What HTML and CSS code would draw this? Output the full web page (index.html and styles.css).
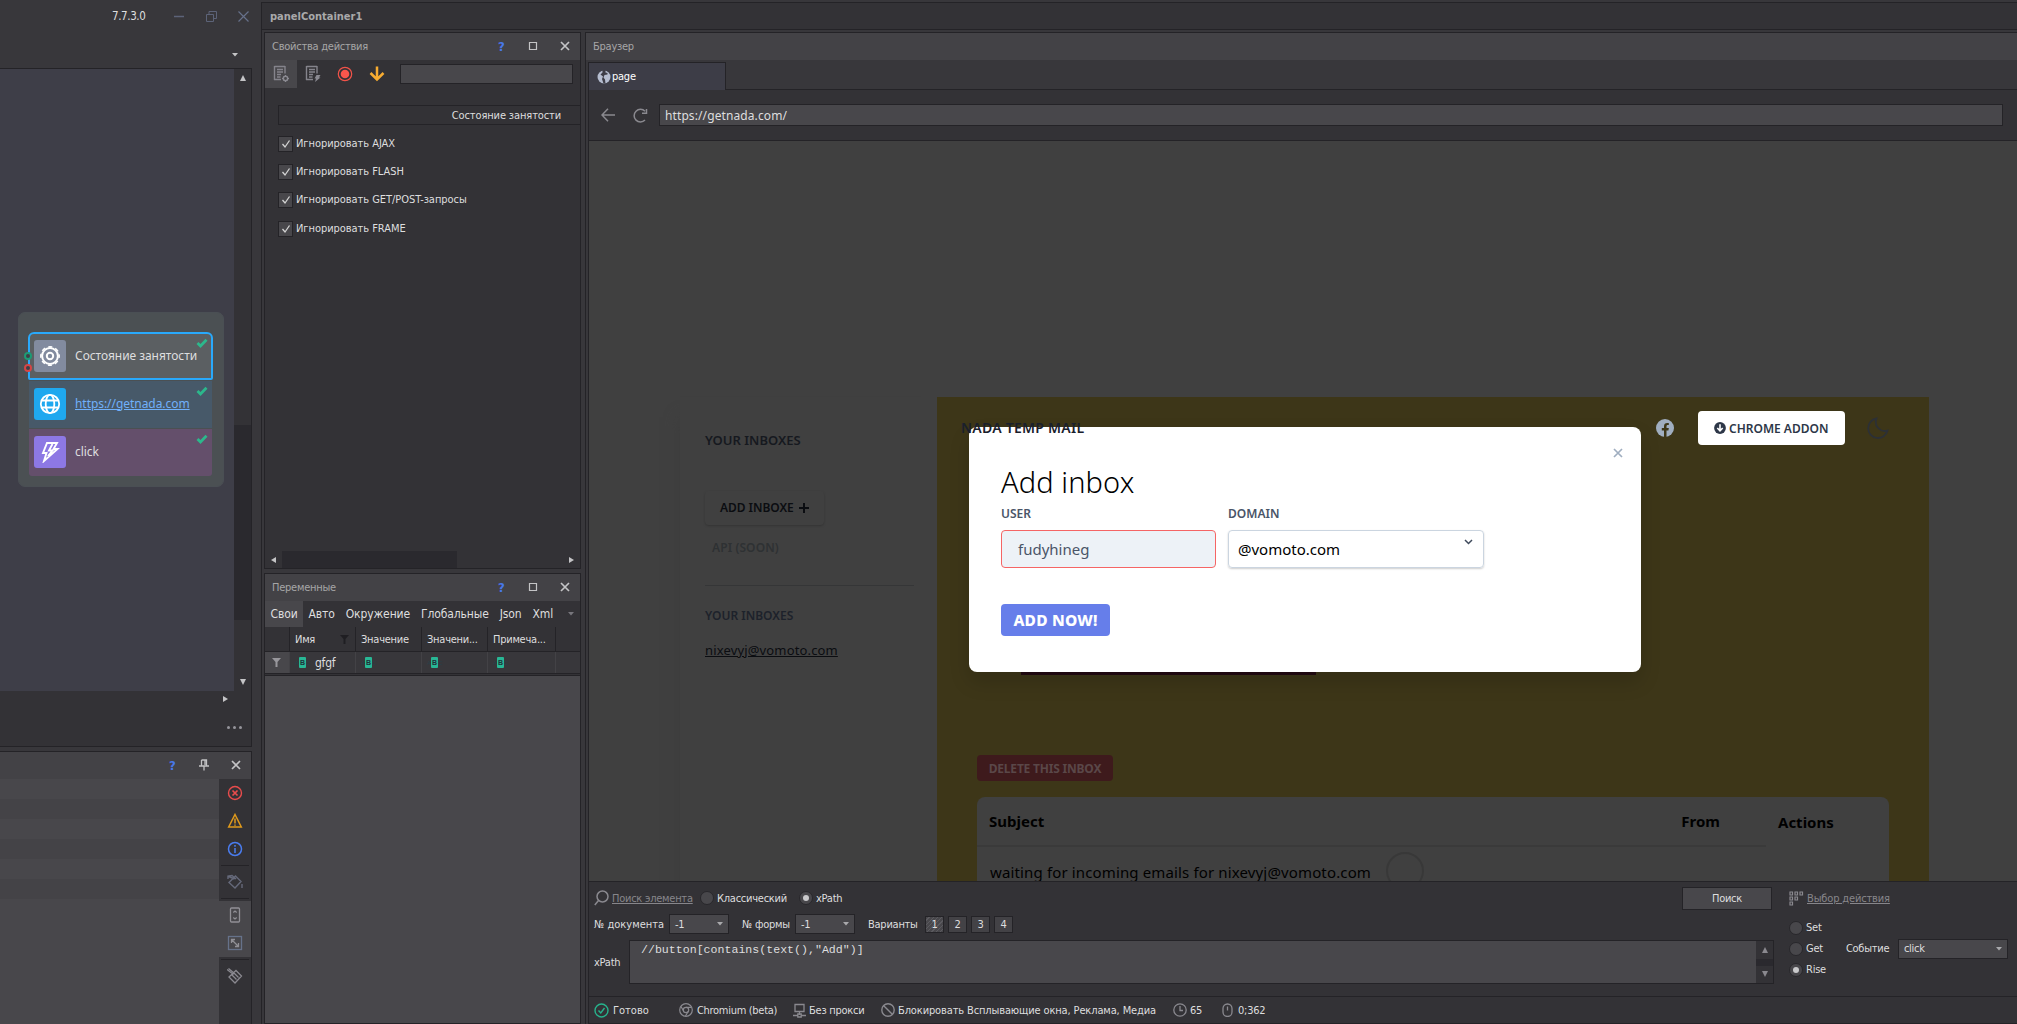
FILE: index.html
```html
<!DOCTYPE html>
<html lang="ru">

<head>
    <meta charset="UTF-8">
    <meta name="viewport" content="width=device-width, initial-scale=1.0">
    <title>panelContainer1</title>
    <link rel="stylesheet" href="styles.css">
</head>

<body>
    <!-- shared icons -->
    <svg width="0" height="0" class="defs">
        <symbol id="close" viewBox="0 0 10 10"><path d="M1 1L9 9M9 1L1 9" fill="none" stroke="currentColor" stroke-width="1.7"/></symbol>
        <symbol id="max" viewBox="0 0 10 10"><path d="M1.5 1.5h7v7h-7z" fill="none" stroke="currentColor" stroke-width="1.2"/></symbol>
        <symbol id="down" viewBox="0 0 8 8"><path d="M1 2h6L4 5.5z" fill="currentColor"/></symbol>
        <symbol id="check" viewBox="0 0 12 10"><path d="M1.5 5L4.5 8L10.5 1.8" fill="none" stroke="#2cb88c" stroke-width="2.8"/></symbol>
        <symbol id="tick" viewBox="0 0 14 14"><path d="M3.5 7L6 10L10.5 3.5" fill="none" stroke="#d4d4d4" stroke-width="1.3"/></symbol>
        <symbol id="list" viewBox="0 0 18 18"><path d="M2.500 1.500h10.500M2.500 1v14M2 14.500h7M13 1v7.500M5 4.500h6M5 7h6M5 9.500h4M5 12h3.500" fill="none" stroke="#85848c" stroke-width="1.400"/></symbol>
    </svg>

    <div class="left">
        <div class="window-bar">
            <span class="version">7.7.3.0</span>
            <svg class="wi" width="11" height="11"><path d="M0 5.500h10" stroke="#5c6378" stroke-width="1.500"/></svg>
            <svg class="wi" width="11" height="11"><path d="M.5 3.500h7v7h-7zM3 3V.5h7.500v7H8" fill="none" stroke="#5c6378"/></svg>
            <svg class="wi" width="11" height="11"><path d="M.5.5l10 10M10.500.5l-10 10" stroke="#66708a" stroke-width="1.200"/></svg>
            <svg class="bar-caret" width="8" height="8"><use href="#down"/></svg>
        </div>

        <div class="flow">
            <div class="flow-row">
                <div class="canvas">
                    <div class="group">
                        <div class="node node-selected">
                            <i class="port port-ok"></i><i class="port port-bad"></i>
                            <span class="node-icon gray"><svg width="22" height="22" viewBox="0 0 22 22" fill="none" stroke="#fff" stroke-width="2"><circle cx="11" cy="11" r="7.900"/><circle cx="11" cy="11" r="9.200" stroke-width="1.500" stroke-dasharray="4 3.226" stroke-dashoffset="2"/><circle cx="11" cy="11" r="3.200"/></svg></span>
                            <span class="node-text">Состояние занятости</span>
                            <svg class="node-check" width="12" height="10"><use href="#check"/></svg>
                        </div>
                        <div class="node node-url">
                            <span class="node-icon blue"><svg width="22" height="22" viewBox="0 0 22 22" fill="none" stroke="#fff" stroke-width="1.800"><circle cx="11" cy="11" r="9.200"/><ellipse cx="11" cy="11" rx="4.300" ry="9.200"/><path d="M3 7.500h16M3 14.500h16"/></svg></span>
                            <a class="node-text link">https://getnada.com</a>
                            <svg class="node-check" width="12" height="10"><use href="#check"/></svg>
                        </div>
                        <div class="node node-click">
                            <span class="node-icon violet"><svg width="22" height="22" viewBox="0 0 22 22" fill="none" stroke="#fff" stroke-width="1.900"><path d="M8 2h10l-3.500 6h4L5 20l2.500-8H4zM13.500 3l-3.500 6.500h3.500L9 15"/></svg></span>
                            <span class="node-text">click</span>
                            <svg class="node-check" width="12" height="10"><use href="#check"/></svg>
                        </div>
                    </div>
                </div>
                <div class="vscroll">
                    <svg width="8" height="6"><path d="M1 6L4 0l3 6z" fill="#c4c4c6"/></svg>
                    <div class="vthumb"></div>
                    <svg width="8" height="6"><path d="M1 0l3 6l3-6z" fill="#c4c4c6"/></svg>
                </div>
            </div>
            <div class="hscroll"><svg width="6" height="8"><path d="M0 1l5 3l-5 3z" fill="#c4c4c6"/></svg></div>
            <div class="dots"><i></i><i></i><i></i></div>
        </div>

        <div class="log">
            <div class="head log-head">
                <span class="help">?</span>
                <svg width="10" height="12" fill="none" stroke="#c2c2c4" stroke-width="1.300"><path d="M2.500 1h5v5.500M2.500 1v5.500M0 7h10M5 7v4.500M6 1v5"/></svg>
                <svg width="10" height="10"><use href="#close"/></svg>
            </div>
            <div class="log-body">
                <div class="log-rows"></div>
                <div class="log-tools">
                    <div class="tool"><svg width="16" height="16" fill="none" stroke="#e84c4c" stroke-width="1.400"><circle cx="8" cy="8" r="6.500"/><path d="M5.500 5.500l5 5M10.500 5.500l-5 5" stroke-width="1.700"/></svg></div>
                    <div class="tool"><svg width="16" height="16" fill="none" stroke="#e09a1c" stroke-width="1.500"><path d="M8 1.500L14.300 14H1.700zM8 5.500v5M8 11.500v1.300"/></svg></div>
                    <div class="tool"><svg width="16" height="16" fill="none" stroke="#4a7df0" stroke-width="1.500"><circle cx="8" cy="8" r="6.500"/><path d="M8 4v1.700M8 7v5"/></svg></div>
                    <div class="tool tool-line"><svg width="16" height="16" fill="none" stroke="#65697a" stroke-width="1.400"><path d="M8.500 2L14 7.500l-6 6.500L2 8.500zM1 5V2l4-.5l4 3.500M1.500 2.500l6 2.500M15 10v4"/></svg></div>
                    <div class="tool tool-on"><svg width="16" height="16" fill="none" stroke="#919096" stroke-width="1.300"><rect x="3.500" y="1" width="9" height="14" rx="1"/><path d="M6.300 5.500L8 4l1.700 1.500M6.300 10.500L8 12l1.700-1.500"/></svg></div>
                    <div class="tool tool-on"><svg width="16" height="16" fill="none" stroke="#919096" stroke-width="1.300"><rect x="1.500" y="1.500" width="13" height="13" stroke="#66728a"/><path d="M4.500 8V4.500H8M4.500 4.500l7 7M8 11.500h3.500V8"/></svg></div>
                    <div class="tool tool-line"><svg width="16" height="16" fill="none" stroke="#8a8990" stroke-width="1.300"><path d="M9 2.500L14.500 8L8 15L2 9zM0 1.500l6.500 5M1.500 .5l6 5M4.500 6.500l5 5M6.500 4.500l5 5"/></svg></div>
                </div>
            </div>
        </div>
    </div>

    <div class="container">
        <div class="container-title">panelContainer1</div>
        <div class="panels">
            <div class="side">
                <div class="panel props">
                    <div class="head">
                        <span class="head-title">Свойства действия</span>
                        <span class="help">?</span>
                        <svg width="10" height="10"><use href="#max"/></svg>
                        <svg width="10" height="10"><use href="#close"/></svg>
                    </div>
                    <div class="props-tools">
                        <span class="pt pt-on"><svg width="18" height="18"><use href="#list"/><circle cx="13.500" cy="13.500" r="2.200" fill="none" stroke="#8b8a92" stroke-width="1.500"/><path d="M13.500 10v1M13.500 16v1M10 13.500h1M16 13.500h1" stroke="#8b8a92"/></svg></span>
                        <span class="pt"><svg width="18" height="18"><use href="#list"/><path d="M12.500 10h4l-1.500 2.500h1.500L11 17l1-3.500h-1.500z" fill="#8b8a92"/></svg></span>
                        <span class="pt"><svg width="16" height="16"><circle cx="8" cy="8" r="6.700" fill="none" stroke="#f25349" stroke-width="1.200"/><circle cx="8" cy="8" r="4.300" fill="#f9564c"/></svg></span>
                        <span class="pt"><svg width="16" height="16"><path d="M8 .5v13M1.500 7L8 13.500L14.500 7" fill="none" stroke="#f7ac31" stroke-width="2.500"/></svg></span>
                        <div class="props-input"></div>
                    </div>
                    <div class="props-body">
                        <div class="props-group">Состояние занятости</div>
                        <div class="check"><i><svg width="14" height="14"><use href="#tick"/></svg></i>Игнорировать AJAX</div>
                        <div class="check"><i><svg width="14" height="14"><use href="#tick"/></svg></i>Игнорировать FLASH</div>
                        <div class="check"><i><svg width="14" height="14"><use href="#tick"/></svg></i>Игнорировать GET/POST-запросы</div>
                        <div class="check"><i><svg width="14" height="14"><use href="#tick"/></svg></i>Игнорировать FRAME</div>
                    </div>
                    <div class="props-scroll">
                        <svg width="6" height="8"><path d="M5 1L0 4l5 3z" fill="#c4c4c6"/></svg>
                        <div class="hthumb"></div>
                        <svg width="6" height="8"><path d="M0 1l5 3l-5 3z" fill="#c4c4c6"/></svg>
                    </div>
                </div>

                <div class="panel vars">
                    <div class="head">
                        <span class="head-title">Переменные</span>
                        <span class="help">?</span>
                        <svg width="10" height="10"><use href="#max"/></svg>
                        <svg width="10" height="10"><use href="#close"/></svg>
                    </div>
                    <div class="tabs">
                        <span class="tab tab-on">Свои</span><span class="tab">Авто</span><span class="tab">Окружение</span><span class="tab">Глобальные</span><span class="tab">Json</span><span class="tab">Xml</span>
                        <svg width="8" height="8"><use href="#down"/></svg>
                    </div>
                    <div class="vrow vhead">
                        <div></div>
                        <div>Имя<svg class="funnel" width="9" height="9"><path d="M0 0h9L5.500 4v5h-2V4z" fill="#1f1e22"/></svg></div>
                        <div>Значение</div>
                        <div>Значени...</div>
                        <div>Примеча...</div>
                        <div></div>
                    </div>
                    <div class="vrow vfilter">
                        <div><svg width="9" height="9"><path d="M0 0h9L5.500 4v5h-2V4z" fill="#98979c"/></svg></div>
                        <div><span class="abc">A<b>B</b>C</span><span class="value">gfgf</span></div>
                        <div><span class="abc">A<b>B</b>C</span></div>
                        <div><span class="abc">A<b>B</b>C</span></div>
                        <div><span class="abc">A<b>B</b>C</span></div>
                        <div></div>
                    </div>
                    <div class="vbody"></div>
                </div>
            </div>

            <div class="browser">
                <div class="head"><span class="head-title">Браузер</span></div>
                <div class="browser-in">
                    <div class="page-tabs">
                        <div class="page-tab"><svg width="14" height="14"><circle cx="7" cy="7" r="6.500" fill="#b5bdd0"/><path d="M5.500 0v2.500l-2 2l2.500 2l-1 2.500l1.500 4.500h2l-.5-4l-1.500-2l1-2.500l3-.5V3L8.500 2.500V0z" fill="#3d3d47"/><path d="M9 6.500l3 .5l-1 3.500l-2-1z" fill="#b5bdd0"/></svg>page</div>
                        <div class="page-rest"></div>
                    </div>
                    <div class="nav">
                        <svg width="14" height="14" fill="none" stroke="#8a898f" stroke-width="1.500"><path d="M14 7H1M7 .8L1 7l6 6.200"/></svg>
                        <svg width="15" height="15" fill="none" stroke="#8a898f" stroke-width="1.500"><path d="M12 12A6.300 6.300 0 1 1 12 3.300M13.500 1v4.300H9"/></svg>
                        <div class="url">https://getnada.com/</div>
                    </div>

                    <div class="web">
                        <aside class="inboxes">
                            <h3>YOUR INBOXES</h3>
                            <div class="add-inbox"><span>ADD INBOXE</span><svg width="12" height="12"><path d="M6 1v10M1 6h10" stroke="#0b0d11" stroke-width="2"/></svg></div>
                            <div class="api">API (SOON)</div>
                            <hr>
                            <h4>YOUR INBOXES</h4>
                            <a>nixevyj@vomoto.com</a>
                        </aside>
                        <main class="mail">
                            <div class="mail-top">
                                <b class="brand">NADA TEMP MAIL</b>
                                <svg width="18" height="18"><circle cx="9" cy="9" r="9" fill="#a0aec0"/><path d="M8 18v-6.500H5.800V9H8V7.200C8 5 9.300 3.900 11.200 3.900l1.600.1v2h-1c-1 0-1.300.6-1.300 1.300V9h2.300l-.4 2.500h-1.900V18z" fill="#3d3618"/></svg>
                                <div class="addon"><svg width="12" height="12"><circle cx="6" cy="6" r="5.900" fill="#2d3748"/><path d="M6 2.300v6M3.300 6L6 8.800L8.700 6" fill="none" stroke="#fff" stroke-width="1.600"/></svg><span>CHROME ADDON</span></div>
                                <svg width="22" height="22"><path d="M9.500 1.500A9.800 9.800 0 1 0 20.500 13.500A9 9 0 0 1 9.500 1.500z" fill="none" stroke="#2c3036" stroke-width="1.800"/></svg>
                            </div>
                            <div class="banner"></div>
                            <div class="delete">DELETE THIS INBOX</div>
                            <div class="letters">
                                <div class="letters-head"><b>Subject</b><b>From</b></div>
                                <b class="actions">Actions</b>
                                <div class="waiting"><span>waiting for incoming emails for nixevyj@vomoto.com</span><i></i></div>
                            </div>
                        </main>

                        <div class="modal">
                            <svg class="modal-close" width="10" height="10"><use href="#close"/></svg>
                            <h2>Add inbox</h2>
                            <div class="fields">
                                <div class="user"><label>USER</label><div class="field field-user">fudyhineg</div></div>
                                <div class="domain"><label>DOMAIN</label><div class="field field-domain"><span>@vomoto.com</span><svg width="9" height="6"><path d="M1 1l3.500 3.500L8 1" fill="none" stroke="#3f4a5c" stroke-width="1.500"/></svg></div></div>
                            </div>
                            <div class="add-now">ADD NOW!</div>
                        </div>
                    </div>

                    <div class="search">
                        <div class="search-main">
                            <div class="s-row">
                                <svg width="15" height="16" fill="none" stroke="#8a898f" stroke-width="1.500"><circle cx="8.500" cy="6.500" r="5.500"/><path d="M4.500 10.500L.8 15"/></svg>
                                <span class="cap cap-search">Поиск элемента</span>
                                <i class="radio"></i><span class="r1">Классический</span>
                                <i class="radio radio-on"></i><span>xPath</span>
                                <div class="find">Поиск</div>
                            </div>
                            <div class="s-row s-row2">
                                <span class="l-doc">№ документа</span><div class="combo">-1<svg width="8" height="8"><use href="#down"/></svg></div>
                                <span class="l-form">№ формы</span><div class="combo">-1<svg width="8" height="8"><use href="#down"/></svg></div>
                                <span class="l-var">Варианты</span>
                                <div class="var var-on">1</div><div class="var">2</div><div class="var">3</div><div class="var">4</div>
                            </div>
                            <div class="s-row s-row3">
                                <span class="l-xpath">xPath</span>
                                <div class="xpath">
                                    <code>//button[contains(text(),"Add")]</code>
                                    <div class="xscroll">
                                        <svg width="8" height="6"><path d="M1 6L4 0l3 6z" fill="#8a898f"/></svg>
                                        <div></div>
                                        <svg width="8" height="6"><path d="M1 0l3 6l3-6z" fill="#8a898f"/></svg>
                                    </div>
                                </div>
                            </div>
                        </div>
                        <div class="search-act">
                            <div class="s-row">
                                <svg width="15" height="15" fill="none" stroke="#8a898f" stroke-width="1.200"><path d="M1 1h2.500v3H1zM6 1h2.500v3H6zM11 1h2.500v3H11zM1 6h2.500v3H1zM6 6h2.500v3H6zM1 11h2.500v3H1z"/></svg>
                                <span class="cap cap-act">Выбор действия</span>
                            </div>
                            <div class="a-row a-first"><i class="radio"></i>Set</div>
                            <div class="a-row"><i class="radio"></i>Get<span class="l-event">Событие</span><div class="combo event">click<svg width="8" height="8"><use href="#down"/></svg></div></div>
                            <div class="a-row"><i class="radio radio-on"></i>Rise</div>
                        </div>
                    </div>

                    <div class="status">
                        <div class="st st1"><svg width="15" height="15" fill="none" stroke="#27b38c" stroke-width="1.400"><circle cx="7.500" cy="7.500" r="6.500"/><path d="M4.500 7.500l2.300 2.500L10.500 5"/></svg>Готово</div>
                        <div class="st st2"><svg width="14" height="14" fill="none" stroke="#8a898f" stroke-width="1.200"><circle cx="7" cy="7" r="6.300"/><circle cx="7" cy="7" r="2.700"/><path d="M7 4.300h5.500M4.700 8.300L2 3.500M9.300 8.300L6.500 13"/></svg>Chromium (beta)</div>
                        <div class="st st3"><svg width="13" height="15" fill="none" stroke="#8a898f" stroke-width="1.300"><path d="M2 1.500h9v7H2zM6.500 9v3M0 12.500h4.500M8.500 12.500H13M4.800 11h3.400v3H4.800z"/></svg>Без прокси</div>
                        <div class="st st4"><svg width="14" height="14" fill="none" stroke="#8a898f" stroke-width="1.400"><circle cx="7" cy="7" r="6.200"/><path d="M2.700 2.700l8.600 8.600"/></svg>Блокировать Всплывающие окна, Реклама, Медиа</div>
                        <div class="st st5"><svg width="14" height="14" fill="none" stroke="#8a898f" stroke-width="1.300"><circle cx="7" cy="7" r="6.200"/><path d="M7 3v4.500h3"/></svg>65</div>
                        <div class="st st6"><svg width="11" height="14" fill="none" stroke="#8a898f" stroke-width="1.300"><rect x="1" y="1" width="9" height="12.500" rx="4.500"/><path d="M5.500 3.500v4"/></svg>0;362</div>
                    </div>
                </div>
            </div>
        </div>
    </div>
</body>

</html>
```

FILE: styles.css
```css
* {
    box-sizing: border-box;
}

body {
    margin: 0;
    width: 2017px;
    height: 1024px;
    overflow: hidden;
    display: flex;
    background: #38373b;
    color: #dededf;
    font-family: "DejaVu Sans Condensed", "DejaVu Sans", sans-serif;
    font-stretch: condensed;
    font-size: 11px;
    letter-spacing: -0.25px;
    white-space: nowrap;
}

svg {
    display: block;
    flex: none;
}

i {
    display: block;
    flex: none;
}

.defs {
    position: absolute;
}

/* left column */
.left {
    width: 261px;
    flex: none;
    display: flex;
    flex-direction: column;
}

.window-bar {
    height: 68px;
    display: flex;
    flex-wrap: wrap;
    align-content: flex-start;
    padding: 8px 12px 0 112px;
    font-size: 11.500px;
    letter-spacing: -0.4px;
    line-height: 16px;
}

.version {
    width: 41px;
}

.wi {
    margin: 3px 0 0 21px;
}

.bar-caret {
    margin: 27px 0 0 119px;
    color: #c4c4c6;
}

.flow {
    width: 252px;
    height: 679px;
    border: 1px solid #242327;
    border-left: 0;
    background: #333236;
}

.flow-row {
    display: flex;
    height: 622px;
}

.canvas {
    width: 234px;
    background: #3e3e48;
    padding: 243px 0 0 18px;
}

.group {
    width: 206px;
    height: 175px;
    border: 1px solid #4a4f54;
    border-radius: 7px;
    background: #4b5053;
    padding: 19px 0 0 10px;
}

.node {
    position: relative;
    width: 183px;
    height: 47px;
    margin-bottom: 1px;
    display: flex;
    align-items: center;
    padding: 0 0 1px 5px;
    font-family: "Noto Sans", sans-serif;
    font-size: 12px;
    letter-spacing: -0.05px;
}

.node-selected {
    width: 185px;
    height: 48px;
    margin-left: -1px;
    padding: 0 0 1px 4px;
    border: 2px solid #29a9fb;
    border-radius: 6px 6px 2px 2px;
    background: #5b5f62;
}

.node-url {
    background: #475969;
}

.node-click {
    background: #644f6b;
    border-radius: 0 0 3px 3px;
}

.node-icon {
    width: 32px;
    height: 32px;
    border-radius: 3px;
    display: grid;
    place-items: center;
}

.gray {
    background: #828b9f;
}

.blue {
    background: #1fa8ef;
}

.violet {
    background: #8d78e4;
}

.node-text {
    margin: -2px 0 0 9px;
}

.node-selected .node-text {
    margin-top: 0;
}

.link {
    color: #70b0fa;
    text-decoration: underline;
}

.node-check {
    position: absolute;
    top: 5px;
    right: 4px;
}

.node-selected .node-check {
    top: 4px;
    right: 3px;
}

.port {
    position: absolute;
    left: -6px;
    top: 18px;
    width: 8px;
    height: 8px;
    border: 2px solid #1c9b75;
    border-radius: 50%;
    background: #3e3e48;
}

.port-bad {
    top: 30px;
    border-color: #d64545;
}

.vscroll {
    width: 17px;
    display: flex;
    flex-direction: column;
    align-items: center;
    padding: 6px 0;
}

.vthumb {
    width: 17px;
    height: 195px;
    margin: 344px 0 59px;
    background: #2a292e;
}

.hscroll {
    height: 17px;
    padding: 4px 0 0 223px;
}

.dots {
    display: flex;
    gap: 3px;
    padding: 18px 0 0 227px;
}

.dots i {
    width: 3px;
    height: 3px;
    border-radius: 50%;
    background: #96959b;
}

.log {
    margin-top: 4px;
    width: 252px;
    height: 273px;
    border: 1px solid #242327;
    border-width: 1px 1px 0 0;
}

.head {
    height: 27px;
    background: #434246;
    color: #a6a6a7;
    display: flex;
    align-items: center;
    padding: 0 10px 1px 7px;
}

.head svg {
    margin-left: 22px;
    color: #c4c4c6;
}

.head-title {
    flex: 1;
}

.help {
    color: #4878ea;
    font-weight: bold;
    font-size: 13px;
    width: 8px;
}

.log-head {
    padding-left: 169px;
    padding-right: 9px;
}

.log-body {
    display: flex;
    height: 245px;
}

.log-rows {
    width: 219px;
    background: linear-gradient(#48474b 50%, #444347 50%) 0 0 / 100% 40px repeat-y;
    border-bottom: 125px solid #48474b;
}

.log-tools {
    width: 32px;
    background: #333236;
}

.tool {
    height: 28px;
    display: grid;
    place-items: center;
}

.tool-line {
    height: 33px;
    margin: 2px 2px 0;
    border-top: 1px solid #242327;
}

.tool-line:nth-child(4) {
    height: 34px;
    border-bottom: 1px solid #242327;
    margin-bottom: 2px;
}

.tool-on {
    background: #48474b;
}

/* dock container */
.container {
    flex: 1;
    margin-top: 2px;
    border: 1px solid #242327;
    border-right: 0;
    border-bottom: 0;
}

.container-title {
    height: 27px;
    border-bottom: 1px solid #242327;
    background: #333236;
    padding-left: 8px;
    line-height: 27px;
    font-weight: bold;
    color: #a9a9aa;
    letter-spacing: 0;
}

.panels {
    display: flex;
    gap: 4px;
    padding: 2px 0 0 2px;
}

.side {
    width: 317px;
    flex: none;
}

.panel {
    border: 1px solid #242327;
    background: #333236;
    display: flex;
    flex-direction: column;
}

.props {
    height: 537px;
}

.props-tools {
    display: flex;
    align-items: flex-start;
    height: 28px;
}

.pt {
    width: 32px;
    height: 28px;
    display: grid;
    place-items: center;
}

.pt-on {
    background: #48474b;
}

.props-input {
    width: 173px;
    height: 20px;
    margin: 4px 0 0 7px;
    border: 1px solid #242327;
    background: #48474b;
}

.props-body {
    flex: 1;
    padding: 17px 0 0 13px;
    letter-spacing: -0.05px;
}

.props-group {
    height: 20px;
    border: 1px solid #242327;
    border-right: 0;
    line-height: 19px;
    text-align: right;
    padding-right: 19px;
    margin-bottom: 10px;
    letter-spacing: -0.12px;
}

.check {
    height: 17px;
    margin-bottom: 11px;
    display: flex;
    align-items: center;
    gap: 3px;
}

.check:last-child {
    margin-top: 12px;
}

.check i {
    width: 15px;
    height: 16px;
    border: 1px solid #242327;
    background: #48474b;
}

.props-scroll {
    height: 17px;
    display: flex;
    align-items: center;
    padding: 0 5px 0 6px;
}

.hthumb {
    width: 175px;
    height: 17px;
    margin: 0 auto 0 5px;
    background: #2a292e;
}

.vars {
    margin-top: 4px;
    height: 451px;
}

.tabs {
    display: flex;
    align-items: center;
    height: 26px;
    font-size: 12px;
    letter-spacing: -0.12px;
    color: #dededf;
}

.tab {
    line-height: 26px;
    padding: 0 5.500px;
}

.tab-on {
    background: #48474b;
}

.tabs svg {
    color: #77767c;
    margin-left: auto;
    margin-right: 5px;
}

.vrow {
    display: grid;
    grid-template-columns: 25px 66px 66px 66px 68px 1fr;
    border-bottom: 1px solid #242327;
}

.vrow>div {
    height: 24px;
    border-right: 1px solid #242327;
    display: flex;
    align-items: center;
    padding-left: 5px;
}

.vrow>div:last-child {
    border-right: 0;
}

.funnel {
    margin-left: auto;
    margin-right: 6px;
}

.vrow.vfilter>div {
    height: 21px;
    border-color: #434246;
}

.vfilter {
    background: #38373b;
}

.vrow.vfilter>div:first-child {
    background: #48474b;
    padding-left: 7px;
}

.abc {
    width: 16px;
    display: flex;
    align-items: center;
    font: 6px "Liberation Sans", sans-serif;
    letter-spacing: 0;
    color: #29404a;
}

.abc b {
    width: 7px;
    height: 11px;
    border-radius: 1px;
    background: #28b795;
    color: #20323a;
    font-size: 7px;
    line-height: 11px;
    text-align: center;
}

.value {
    margin-left: 4px;
    font-size: 12px;
}

.vbody {
    flex: 1;
    margin-top: 1px;
    border-top: 1px solid #242327;
    background: #48474b;
}

/* browser */
.browser {
    flex: 1;
    border: 1px solid #242327;
    border-width: 1px 0 0 1px;
    height: 992px;
}

.browser-in {
    margin-left: 2px;
}

.page-tabs {
    display: flex;
    height: 30px;
    padding-top: 2px;
}

.page-tab {
    width: 138px;
    border: 1px solid #242327;
    border-bottom: 0;
    background: #3d3d47;
    display: flex;
    align-items: center;
    padding-left: 8px;
    gap: 1px;
    color: #fff;
}

.page-rest {
    flex: 1;
    border-bottom: 1px solid #242327;
}

.nav {
    height: 51px;
    border-left: 1px solid #242327;
    border-bottom: 1px solid #242327;
    background: #333236;
    display: flex;
    align-items: center;
    padding-left: 12px;
}

.nav svg+svg {
    margin-left: 18px;
}

.url {
    width: 1344px;
    height: 22px;
    margin-left: 11px;
    border: 1px solid #242327;
    background: #48474b;
    padding-left: 5px;
    line-height: 21px;
    font-family: "Noto Sans", sans-serif;
    font-size: 12px;
    letter-spacing: 0.1px;
}

.web {
    position: relative;
    height: 740px;
    border-left: 1px solid #242327;
    padding-top: 256px;
    overflow: hidden;
    background: #404040;
    display: flex;
    font-family: "Noto Sans", sans-serif;
    letter-spacing: 0;
    color: #000;
}

.inboxes {
    width: 257px;
    height: 500px;
    padding: 33px 23px 0 25px;
    margin-left: 91px;
    box-shadow: -8px 12px 14px -8px #3c3c3c;
    font-size: 12px;
    line-height: 20px;
}

.inboxes h3 {
    margin: 0;
    font-size: 13px;
    font-weight: 600;
    letter-spacing: 0;
    color: #16191f;
}

.add-inbox {
    width: 119px;
    height: 34px;
    margin-top: 41px;
    border-radius: 4px;
    box-shadow: 0 1px 2px #343434;
    display: flex;
    align-items: center;
    padding-left: 15px;
    gap: 4px;
    font-weight: 600;
    letter-spacing: -0.05px;
    color: #0b0d11;
}

.api {
    margin: 13px 0 27px 7px;
    font-weight: 600;
    letter-spacing: 0.1px;
    color: #2e3133;
}

.inboxes hr {
    margin: 0;
    border: 0;
    height: 1px;
    background: #353637;
}

.inboxes h4 {
    margin: 20px 0 14px;
    font-size: 12px;
    font-weight: 600;
    color: #1d222b;
}

.inboxes a {
    font-size: 13px;
    letter-spacing: 0.15px;
    text-decoration: underline;
    color: #0b0d11;
}

.mail {
    width: 992px;
    height: 500px;
    background: #3d3618;
    padding: 14px 40px 0;
}

.mail-top {
    display: flex;
    align-items: center;
    height: 34px;
    margin-left: -16px;
}

.brand {
    position: relative;
    z-index: 2;
    margin: -2px auto 0 0;
    font-size: 14px;
    font-weight: 600;
    letter-spacing: 0.25px;
    color: #1a202c;
}

.addon {
    width: 147px;
    height: 34px;
    margin: 0 22px 0 24px;
    border-radius: 4px;
    background: #fff;
    display: flex;
    align-items: center;
    padding-left: 16px;
    gap: 3px;
    font-size: 12px;
    font-weight: 600;
    color: #2d3748;
}

.banner {
    width: 295px;
    height: 60px;
    margin: 170px 0 80px 44px;
    background: #230a12;
}

.delete {
    width: 136px;
    height: 26px;
    border-radius: 4px;
    background: #3e1a1c;
    color: #5a4748;
    font-size: 12px;
    font-weight: 700;
    letter-spacing: -0.2px;
    line-height: 27px;
    text-align: center;
}

.letters {
    display: grid;
    grid-template-columns: 789px 123px;
    grid-template-rows: 50px 70px;
    width: 912px;
    height: 120px;
    margin-top: 16px;
    border-radius: 8px;
    background: #404040;
    font-size: 15px;
}

.letters-head {
    border-bottom: 2px solid #3a3a3a;
    padding: 0 46px 0 12px;
    line-height: 49px;
    display: flex;
    justify-content: space-between;
}

.letters b {
    font-weight: 700;
}

.actions {
    line-height: 51px;
    padding-left: 12px;
}

.waiting {
    display: flex;
    padding: 12px 0 0 13px;
    line-height: 26px;
    letter-spacing: 0.14px;
}

.waiting i {
    width: 38px;
    height: 38px;
    margin: -7px 0 0 15px;
    border: 2px solid #383838;
    border-radius: 50%;
}

.modal {
    position: absolute;
    left: 380px;
    top: 286px;
    width: 672px;
    height: 245px;
    border-radius: 8px;
    background: #fff;
    box-shadow: 0 10px 20px rgba(0, 0, 0, 0.15);
    padding: 35px 32px 0;
}

.modal-close {
    position: absolute;
    top: 21px;
    right: 18px;
    color: #a0aec0;
}

.modal h2 {
    margin: 0 0 2px;
    font-size: 29px;
    font-weight: 350;
    letter-spacing: 0.1px;
    line-height: 40px;
}

.fields {
    display: flex;
    gap: 12px;
}

.fields label {
    display: block;
    height: 26px;
    font-size: 12px;
    font-weight: 600;
    line-height: 20px;
    color: #4a5568;
}

.field {
    height: 38px;
    border: 1px solid #f56565;
    border-radius: 4px;
    line-height: 37px;
    font-size: 15px;
}

.field-user {
    width: 215px;
    background: #edf2f7;
    color: #4a5568;
    padding-left: 16px;
}

.field-domain {
    width: 256px;
    border-color: #cbd5e0;
    box-shadow: 0 1px 2px rgba(0, 0, 0, 0.2);
    padding: 0 10px 0 9px;
    display: flex;
    justify-content: space-between;
}

.field-domain svg {
    margin-top: 8px;
}

.add-now {
    width: 109px;
    height: 32px;
    margin-top: 36px;
    border-radius: 4px;
    background: #667eea;
    color: #fff;
    font-size: 15.500px;
    font-weight: 800;
    letter-spacing: 0.2px;
    line-height: 32px;
    text-align: center;
}

/* element search */
.search {
    height: 115px;
    border: 1px solid #242327;
    border-right: 0;
    border-bottom: 0;
    background: #333236;
    padding: 5px 0 0 5px;
    display: flex;
}

.search-main {
    width: 1180px;
}

.search-act {
    margin-left: 15px;
}

.s-row {
    display: flex;
    align-items: center;
    height: 22px;
}

.cap {
    color: #87868b;
    text-decoration: underline;
    margin-left: 3px;
}

.cap-search {
    width: 88px;
}

.cap-act {
    letter-spacing: -0.15px;
}

.radio {
    width: 14px;
    height: 14px;
    margin-right: 3px;
    border: 1px solid #28272b;
    border-radius: 50%;
    background: #48474b;
    display: grid;
    place-items: center;
}

.radio-on::after {
    content: "";
    width: 6px;
    height: 6px;
    border-radius: 50%;
    background: #c9c9cb;
}

.r1 {
    width: 82px;
}

.find {
    width: 90px;
    height: 23px;
    margin: 0 2px 0 auto;
    border: 1px solid #242327;
    background: #48474b;
    line-height: 22px;
    text-align: center;
}

.s-row2 {
    height: 20px;
    margin: 5px 0 6px;
}

.combo {
    width: 60px;
    height: 20px;
    border: 1px solid #242327;
    background: #48474b;
    padding: 0 4px 0 5px;
    display: flex;
    align-items: center;
    justify-content: space-between;
    color: #dededf;
}

.combo svg {
    color: #a9a9ac;
}

.l-doc {
    width: 75px;
    letter-spacing: 0;
}

.l-form {
    margin-left: 13px;
    width: 53px;
}

.l-var {
    margin-left: 13px;
    width: 57px;
}

.var {
    width: 19px;
    height: 17px;
    margin-right: 4px;
    border: 1px solid #242327;
    background: #434246;
    text-align: center;
    line-height: 16px;
}

.var-on {
    background: repeating-linear-gradient(135deg, #48474b 0 2px, #5b5a5f 2px 3px);
}

.s-row3 {
    height: 44px;
}

.l-xpath {
    width: 35px;
}

.xpath {
    flex: 1;
    height: 44px;
    border: 1px solid #242327;
    background: #48474b;
    display: flex;
    justify-content: space-between;
}

.xpath code {
    padding: 2px 0 0 11px;
    font-family: "Liberation Mono", monospace;
    font-size: 11.600px;
    letter-spacing: 0;
}

.xscroll {
    width: 17px;
    background: #333236;
    display: flex;
    flex-direction: column;
    align-items: center;
    justify-content: space-between;
    padding: 6px 0;
}

.xscroll div {
    width: 17px;
    height: 7px;
    background: #2a292e;
}

.a-row {
    height: 21px;
    display: flex;
    align-items: center;
}

.a-first {
    margin-top: 8px;
}

.l-event {
    margin-left: 23px;
    width: 52px;
}

.event {
    width: 110px;
}

.status {
    height: 28px;
    border: 1px solid #242327;
    border-right: 0;
    background: #333236;
    display: flex;
    align-items: center;
    padding-left: 5px;
}

.st {
    display: flex;
    align-items: center;
    gap: 4px;
}

.st1 {
    width: 85px;
    letter-spacing: 0;
}

.st2 {
    width: 114px;
    letter-spacing: -0.3px;
}

.st3 {
    width: 88px;
    gap: 3px;
}

.st4 {
    width: 292px;
    gap: 3px;
    letter-spacing: -0.13px;
}

.st5 {
    width: 49px;
    gap: 3px;
}

.st6 {
    gap: 5px;
}
```
